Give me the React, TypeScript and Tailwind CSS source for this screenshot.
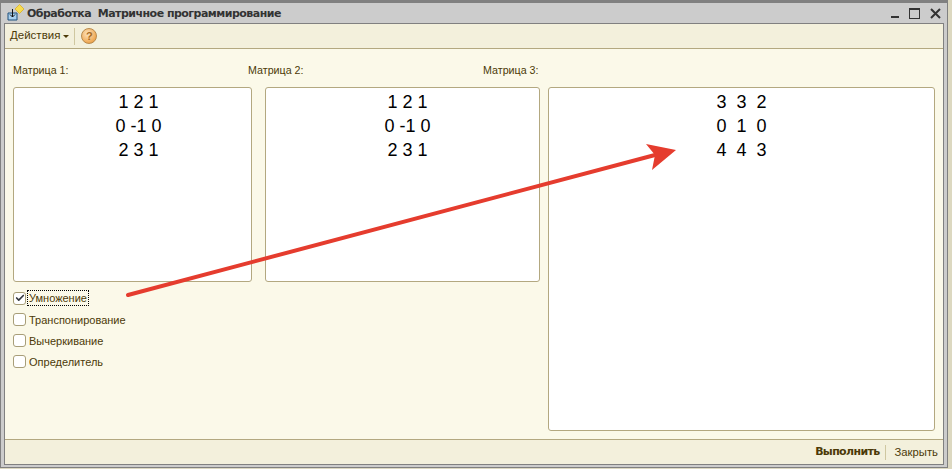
import { Check } from "lucide-react";

function MatrixBox({ rows, className }: { rows: string[]; className: string }) {
  return (
    <div className={`bg-white border border-[#b3a880] rounded-[3px] pt-[2px] text-[18px] leading-[24px] text-black text-center whitespace-pre ${className}`}>
      {rows.map((row) => (
        <div key={row}>{row}</div>
      ))}
    </div>
  );
}

function Option({ label, checked, className }: { label: string; checked?: boolean; className: string }) {
  return (
    <div className={`flex items-center ${className}`}>
      <div className="w-[13px] h-[13px] border border-[#a89e78] rounded-[3px] bg-white flex items-center justify-center">
        {checked && <Check size={10} strokeWidth={4} className="text-[#33373f]" />}
      </div>
      <span className={`ml-[2px] px-[1px] leading-[14px] ${checked ? "outline-1 outline-dotted outline-black" : ""}`}>{label}</span>
    </div>
  );
}

export default function App() {
  return (
    <div className="relative w-[952px] h-[469px] overflow-hidden bg-[#dcd8c0] font-['Liberation_Sans',sans-serif] text-[11px] text-[#4c3a08]">
      <div className="w-[948px] h-[468px] bg-[#cccccc] border-t-[3px] border-[#808080] border-x-[1px] border-b-[1px] pb-[2px] flex flex-col">
        <div className="h-[20px] flex items-center pl-[5px] pr-[6px] shrink-0">
          <svg width="19" height="18" viewBox="0 0 19 18">
            <path d="M2 9h9v7H2z" fill="#a9d0ee" stroke="#1d4f7a" />
            <path d="M6.500 5v8M4 10.500 6.500 13 9 10.500" fill="none" stroke="#111" />
            <path d="M13.500 0.500l4.500 4.500-4.500 4.500-4.500-4.500z" fill="#f7dc50" stroke="#d8ae2a" strokeWidth="0.8" />
          </svg>
          <span className="ml-[2px] mt-[3px] font-['DejaVu_Sans',sans-serif] font-bold text-[11px] text-[#333333] whitespace-pre tracking-[-0.52px]">Обработка  Матричное программирование</span>
          <div className="ml-auto flex items-center gap-[10px]">
            <div className="w-[8px] h-[2px] bg-[#333333] self-end mb-[1px]" />
            <div className="w-[11px] h-[11px] border border-[#333333] border-t-2" />
            <svg width="11" height="11" viewBox="0 0 11 11">
              <path d="M1 1l9 9M10 1l-9 9" stroke="#333333" strokeWidth="2" />
            </svg>
          </div>
        </div>
        <div className="flex-1 mx-[3px] border border-[#808080] flex flex-col bg-[#fbf9e9] min-h-0">
          <div className="h-[25px] shrink-0 bg-[#f3f0dc] border-b border-[#b3a880] flex items-center pl-[5px]">
            <span className="text-[11.5px]">Действия</span>
            <span className="ml-[3px] w-0 h-0 border-x-[3px] border-x-transparent border-t-[3px] border-t-[#4c3a08]" />
            <div className="ml-[5px] w-[1px] h-[17px] bg-[#cfc7a0]" />
            <div className="ml-[6px] w-[16px] h-[16px] rounded-full bg-[radial-gradient(circle_at_40%_35%,#fde3bd,#efa955_70%,#c98536)] border border-[#b98a4c] flex items-center justify-center text-[11px] font-bold text-[#a86a1e]">?</div>
          </div>
          <div className="flex-1 min-h-0 flex flex-col pt-[14px] px-[8px]">
            <div className="flex h-[14px] leading-[14px] text-[10.7px]">
              <span className="w-[235px]">Матрица 1:</span>
              <span className="w-[235px]">Матрица 2:</span>
              <span>Матрица 3:</span>
            </div>
            <div className="flex flex-1 min-h-0 mt-[10px] mb-[8px]">
              <div className="flex flex-col w-[239px]">
                <MatrixBox rows={["1 2 1", "0 -1 0", "2 3 1"]} className="h-[195px] pl-[12px]" />
                <div className="mt-[5px]">
                  <Option label="Умножение" checked className="h-[22px]" />
                  <Option label="Транспонирование" className="h-[21px]" />
                  <Option label="Вычеркивание" className="h-[21px]" />
                  <Option label="Определитель" className="h-[21px]" />
                </div>
              </div>
              <MatrixBox rows={["1 2 1", "0 -1 0", "2 3 1"]} className="w-[275px] h-[195px] ml-[13px] pl-[10px]" />
              <MatrixBox rows={["3  3  2", "0  1  0", "4  4  3"]} className="w-[387px] ml-[8px]" />
            </div>
          </div>
          <div className="h-[25px] shrink-0 bg-[#f3f0dc] border-t border-[#b3a880] flex items-center justify-end pr-[5px]">
            <span className="font-bold text-[11px] font-['DejaVu_Sans',sans-serif] tracking-[-0.65px]">Выполнить</span>
            <div className="ml-[6px] mr-[8px] w-[1px] h-[15px] bg-[#cfc7a0]" />
            <span className="text-[11.3px]">Закрыть</span>
          </div>
        </div>
      </div>
      <svg className="absolute left-0 top-0 pointer-events-none" width="952" height="469" viewBox="0 0 952 469">
        <path d="M128 295 L655 155" stroke="#e53c2e" strokeWidth="4" strokeLinecap="round" />
        <path d="M646 144 L676 150 L652 170 L655 155z" fill="#e53c2e" />
      </svg>
    </div>
  );
}
